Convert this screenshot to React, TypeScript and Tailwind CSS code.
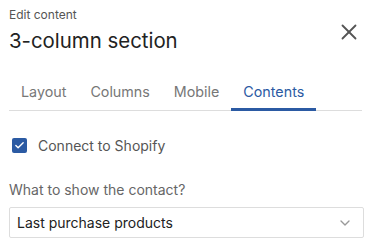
import { Check, ChevronDown, X } from 'lucide-react';

const tabs = ['Layout', 'Columns', 'Mobile', 'Contents'];

export default function App() {
  const active = 'Contents';

  return (
    <div className="w-[371px] h-[242px] bg-white px-[9px] font-['Inter',sans-serif] text-[#222]">
      <div className="flex items-start justify-between pt-[7px]">
        <div>
          <p className="text-[12px] leading-[16px] text-[#555]">Edit content</p>
          <h1 className="text-[20.4px] leading-[28px] mt-[4px] text-[#222]">3-column section</h1>
        </div>
        <button className="mt-[12px] text-[#555]">
          <X className="w-[26px] h-[26px]" strokeWidth={1.7} />
        </button>
      </div>

      <div className="mt-[26px] flex border-b border-[#ddd]">
        {tabs.map((tab) => (
          <div
            key={tab}
            className={
              tab === active
                ? 'px-3 pb-[5px] text-[14.3px] leading-[22px] text-[#2b5aa3] border-b-[3px] border-[#2b5aa3] -mb-px'
                : 'px-3 pb-[5px] text-[14.3px] leading-[22px] text-[#777] border-b-[3px] border-transparent -mb-px'
            }
          >
            {tab}
          </div>
        ))}
      </div>

      <div className="mt-[24px] flex items-center gap-[11px] pl-[3px]">
        <span className="w-[15px] h-[15px] rounded-[2px] bg-[#2b5aa3] flex items-center justify-center">
          <Check className="w-[11px] h-[11px] text-white" strokeWidth={3} />
        </span>
        <span className="text-[14px] text-[#555]">Connect to Shopify</span>
      </div>

      <p className="mt-[24px] text-[14px] leading-[20px] text-[#666]">What to show the contact?</p>

      <div className="mt-[7px] h-[31px] w-[355px] border border-[#ddd] rounded-[2px] flex items-center justify-between pl-[7px] pr-[10px]">
        <span className="text-[14px] text-[#222]">Last purchase products</span>
        <ChevronDown className="w-[16px] h-[16px] text-[#999]" strokeWidth={2} />
      </div>
    </div>
  );
}
